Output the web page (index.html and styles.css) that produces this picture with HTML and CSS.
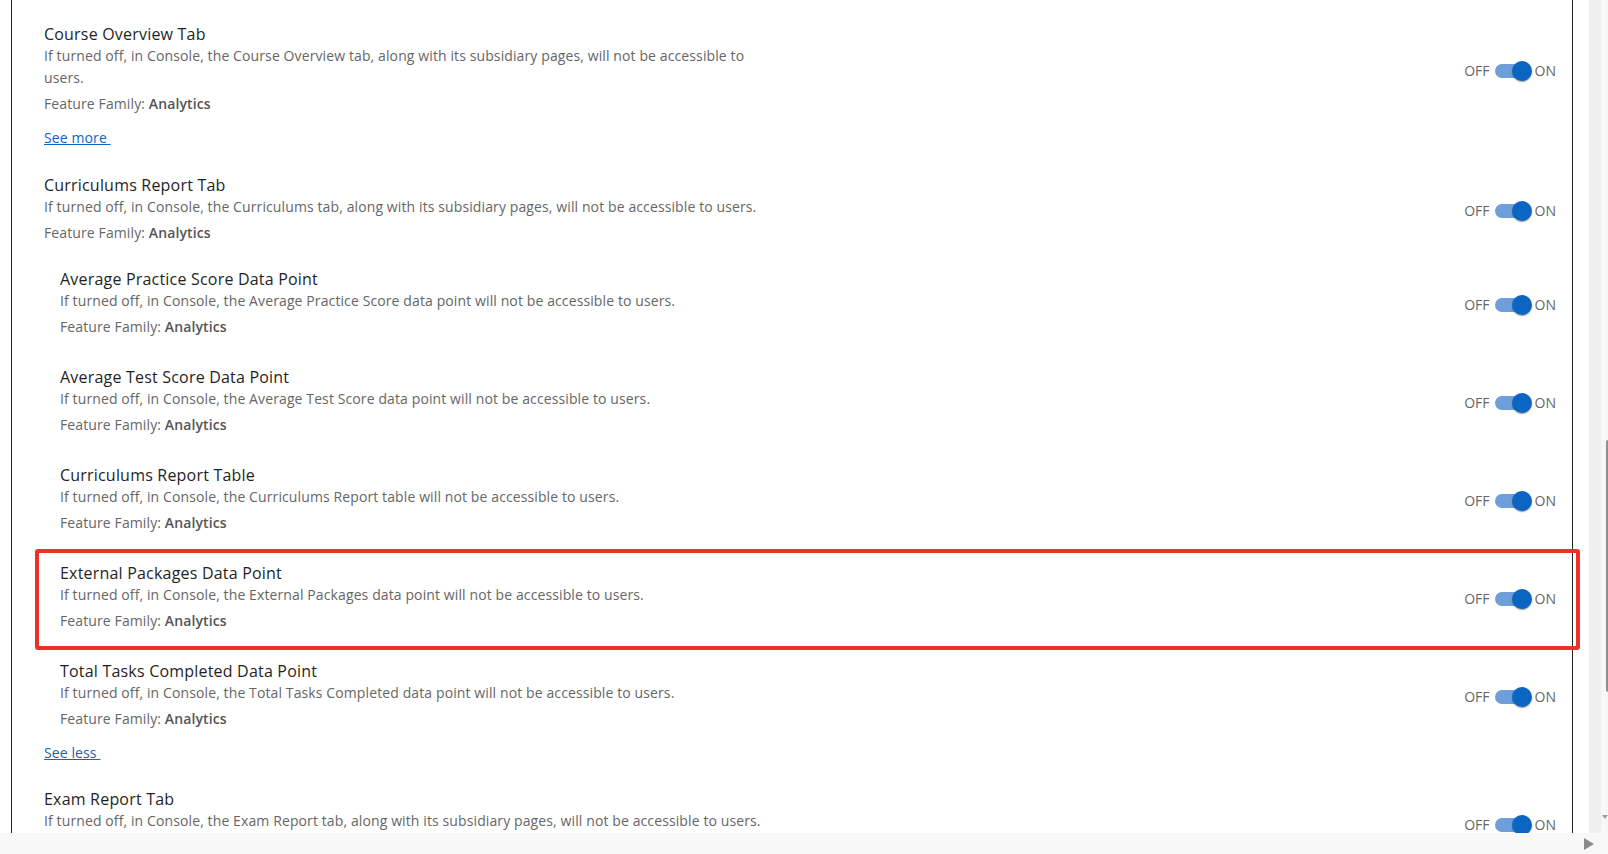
FILE: index.html
```html
<!DOCTYPE html>
<html lang="en">
<head>
    <meta charset="UTF-8">
    <title>Feature Settings</title>
    <link rel="stylesheet" href="styles.css">
</head>
<body>
    <div class="window">
        <div class="viewport">
            <div class="panel-area">
                <div class="panel">

                    <section class="group">
                        <div class="feature">
                            <div class="feature-info">
                                <h3 class="feature-title">Course Overview Tab</h3>
                                <p class="feature-desc">If turned off, in Console, the Course Overview tab, along with its subsidiary pages, will not be accessible to users.</p>
                                <p class="feature-family">Feature Family: <b>Analytics</b></p>
                            </div>
                            <div class="switch-wrap">OFF <span class="switch"><span class="track"></span><span class="thumb"></span></span> ON</div>
                        </div>
                        <a class="more-link" href="#">See more&nbsp;</a>
                    </section>

                    <section class="group">
                        <div class="feature">
                            <div class="feature-info">
                                <h3 class="feature-title">Curriculums Report Tab</h3>
                                <p class="feature-desc">If turned off, in Console, the Curriculums tab, along with its subsidiary pages, will not be accessible to users.</p>
                                <p class="feature-family">Feature Family: <b>Analytics</b></p>
                            </div>
                            <div class="switch-wrap">OFF <span class="switch"><span class="track"></span><span class="thumb"></span></span> ON</div>
                        </div>

                        <div class="children">
                            <div class="feature sub">
                                <div class="feature-info">
                                    <h3 class="feature-title">Average Practice Score Data Point</h3>
                                    <p class="feature-desc">If turned off, in Console, the Average Practice Score data point will not be accessible to users.</p>
                                    <p class="feature-family">Feature Family: <b>Analytics</b></p>
                                </div>
                                <div class="switch-wrap">OFF <span class="switch"><span class="track"></span><span class="thumb"></span></span> ON</div>
                            </div>
                            <div class="feature sub">
                                <div class="feature-info">
                                    <h3 class="feature-title">Average Test Score Data Point</h3>
                                    <p class="feature-desc">If turned off, in Console, the Average Test Score data point will not be accessible to users.</p>
                                    <p class="feature-family">Feature Family: <b>Analytics</b></p>
                                </div>
                                <div class="switch-wrap">OFF <span class="switch"><span class="track"></span><span class="thumb"></span></span> ON</div>
                            </div>
                            <div class="feature sub">
                                <div class="feature-info">
                                    <h3 class="feature-title">Curriculums Report Table</h3>
                                    <p class="feature-desc">If turned off, in Console, the Curriculums Report table will not be accessible to users.</p>
                                    <p class="feature-family">Feature Family: <b>Analytics</b></p>
                                </div>
                                <div class="switch-wrap">OFF <span class="switch"><span class="track"></span><span class="thumb"></span></span> ON</div>
                            </div>
                            <div class="feature sub highlight">
                                <div class="feature-info">
                                    <h3 class="feature-title">External Packages Data Point</h3>
                                    <p class="feature-desc">If turned off, in Console, the External Packages data point will not be accessible to users.</p>
                                    <p class="feature-family">Feature Family: <b>Analytics</b></p>
                                </div>
                                <div class="switch-wrap">OFF <span class="switch"><span class="track"></span><span class="thumb"></span></span> ON</div>
                            </div>
                            <div class="feature sub">
                                <div class="feature-info">
                                    <h3 class="feature-title">Total Tasks Completed Data Point</h3>
                                    <p class="feature-desc">If turned off, in Console, the Total Tasks Completed data point will not be accessible to users.</p>
                                    <p class="feature-family">Feature Family: <b>Analytics</b></p>
                                </div>
                                <div class="switch-wrap">OFF <span class="switch"><span class="track"></span><span class="thumb"></span></span> ON</div>
                            </div>
                        </div>
                        <a class="more-link" href="#">See less&nbsp;</a>
                    </section>

                    <section class="group">
                        <div class="feature">
                            <div class="feature-info">
                                <h3 class="feature-title">Exam Report Tab</h3>
                                <p class="feature-desc">If turned off, in Console, the Exam Report tab, along with its subsidiary pages, will not be accessible to users.</p>
                                <p class="feature-family">Feature Family: <b>Analytics</b></p>
                            </div>
                            <div class="switch-wrap">OFF <span class="switch"><span class="track"></span><span class="thumb"></span></span> ON</div>
                        </div>
                    </section>

                </div>
            </div>
            <div class="vscroll">
                <div class="vthumb"></div>
                <span class="varrow"></span>
            </div>
        </div>
        <div class="hscroll">
            <span class="harrow"></span>
        </div>
    </div>
</body>
</html>
```

FILE: styles.css
```css
body {
    margin: 0;
    background-color: white;
    font-family: 'Open Sans', 'Liberation Sans', sans-serif;
    overflow: hidden;
}

.window {
    display: flex;
    flex-direction: column;
    height: 854px;
}

.viewport {
    display: flex;
    height: 833px;
    overflow: hidden;
}

.panel-area {
    flex: 1;
    padding-left: 11px;
    padding-right: 16px;
}

.panel {
    box-sizing: border-box;
    height: 100%;
    border-left: 1px solid #222;
    border-right: 1px solid #222;
    padding: 24px 16px 0 32px;
}

.group {
    margin-bottom: 26px;
}

.group:nth-child(2) {
    margin-bottom: 25px;
}

.feature {
    position: relative;
    display: flex;
    align-items: center;
    justify-content: space-between;
}

.feature-info {
    max-width: 735px;
}

.feature.sub .feature-info {
    padding-left: 16px;
}

.feature-title {
    margin: 0;
    font-size: 16px;
    font-weight: 400;
    line-height: 21px;
    letter-spacing: 0.2px;
    color: #1f1f1f;
}

.feature-desc {
    margin: 0;
    font-size: 14px;
    line-height: 22px;
    letter-spacing: 0.11px;
    color: #666;
}

.feature-family {
    margin: 4px 0 0;
    font-size: 14px;
    line-height: 22px;
    letter-spacing: 0.11px;
    color: #666;
}

.feature-family b {
    font-weight: 600;
    color: #555;
}

.children {
    display: flex;
    flex-direction: column;
    gap: 29px;
    margin-top: 25px;
}

.more-link {
    display: inline-block;
    margin-top: 12px;
    font-size: 14px;
    line-height: 22px;
    letter-spacing: 0.11px;
    color: #0a66c2;
    text-decoration: underline;
}

/* toggle */
.switch-wrap {
    display: flex;
    align-items: center;
    gap: 2px;
    padding-top: 2px;
    font-size: 14px;
    color: #666;
}

.switch {
    position: relative;
    width: 40px;
    height: 20px;
    margin-right: 1px;
}

.track {
    position: absolute;
    left: 3px;
    top: 3px;
    width: 34px;
    height: 14px;
    border-radius: 7px;
    background-color: #6e9fdb;
}

.thumb {
    position: absolute;
    right: 0;
    top: 0;
    width: 20px;
    height: 20px;
    border-radius: 50%;
    background-color: #0a66c2;
    box-shadow: 0 2px 1px -1px rgba(0, 0, 0, 0.2), 0 1px 1px 0 rgba(0, 0, 0, 0.14), 0 1px 3px 0 rgba(0, 0, 0, 0.12);
}

/* annotation box */
.highlight::after {
    content: '';
    position: absolute;
    left: -9px;
    right: -24px;
    top: -14px;
    bottom: -18px;
    border: 4px solid #ee3027;
    border-radius: 3px;
    pointer-events: none;
}

/* scrollbars */
.vscroll {
    position: relative;
    width: 19px;
    background: linear-gradient(to right, #efefef 12px, #f7f7f7 12px);
}

.vthumb {
    position: absolute;
    left: 17px;
    top: 440px;
    width: 4px;
    height: 252px;
    border-radius: 2px;
    background-color: #909090;
}

.varrow {
    position: absolute;
    right: 0;
    top: 815px;
    border-left: 3px solid transparent;
    border-right: 3px solid transparent;
    border-top: 4px solid #a0a0a0;
}

.hscroll {
    position: relative;
    height: 21px;
    background-color: #f8f8f8;
}

.harrow {
    position: absolute;
    left: 1584px;
    top: 5px;
    border-top: 6px solid transparent;
    border-bottom: 6px solid transparent;
    border-left: 10px solid #8a8a8a;
}
```
